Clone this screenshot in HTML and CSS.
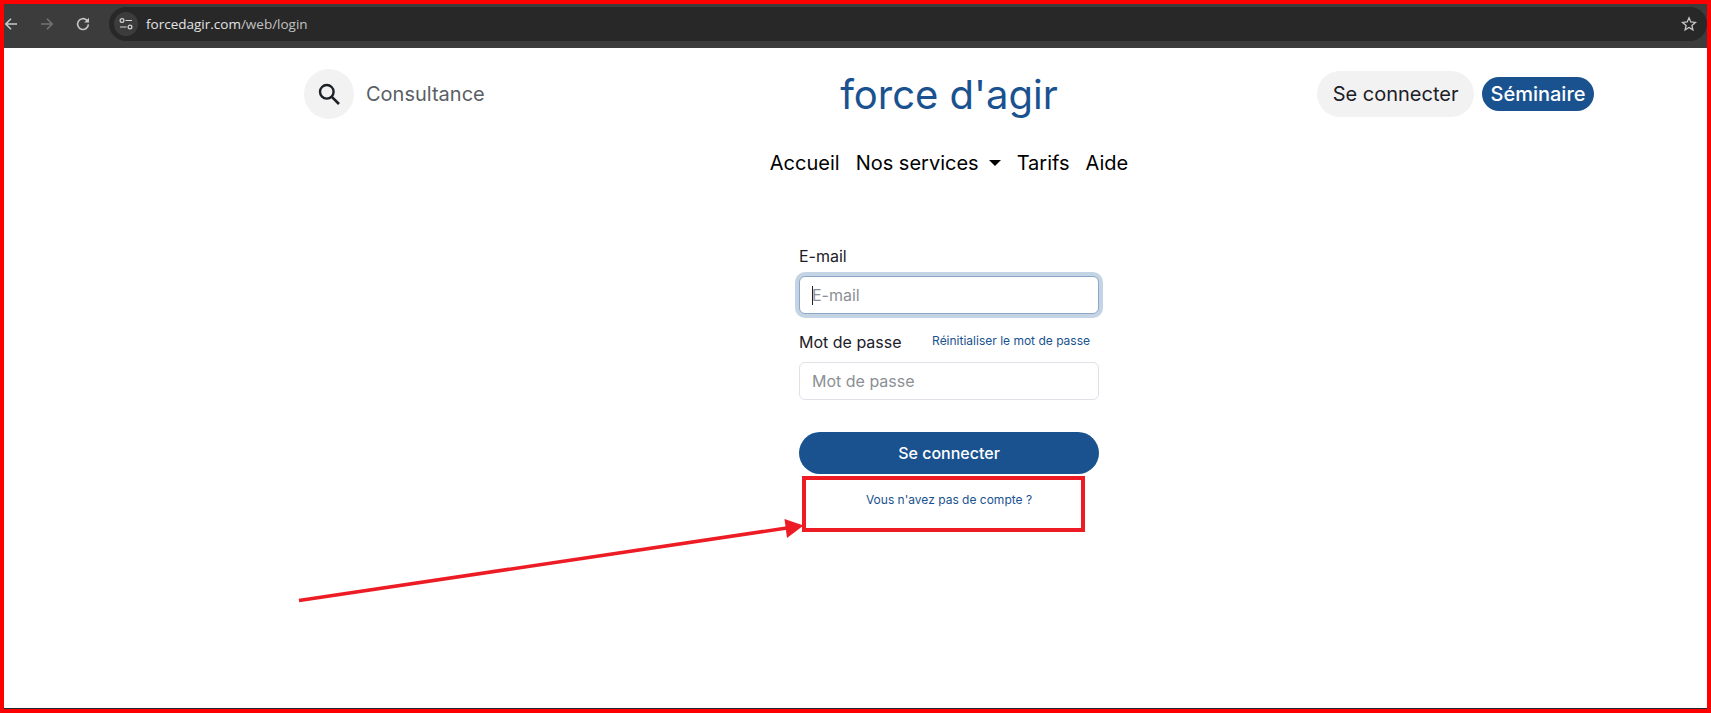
FILE: index.html
```html
<!DOCTYPE html>
<html lang="en">
<head>
    <meta charset="UTF-8">
    <meta name="viewport" content="width=device-width, initial-scale=1.0">
    <title>force d'agir - Se connecter</title>
    <link rel="stylesheet" href="styles.css">
</head>
<body>
    <div class="frame">
        <div class="chrome">
            <div class="chrome-nav">
                <svg class="chrome-icon" width="14" height="14" viewBox="0 0 14 14"><path d="M13 7H2M7 1.800 1.800 7 7 12.200" fill="none" stroke="#c7c7c7" stroke-width="1.600"/></svg>
                <svg class="chrome-icon" width="14" height="14" viewBox="0 0 14 14"><path d="M1 7h11M7 1.800 12.200 7 7 12.200" fill="none" stroke="#737373" stroke-width="1.600"/></svg>
                <svg class="chrome-icon" width="14" height="14" viewBox="0 0 14 14"><path d="M12.400 7.400A5.400 5.400 0 1 1 10.700 3.100L12.400 4.800" fill="none" stroke="#c7c7c7" stroke-width="1.600"/><path d="M13 .8v4.800H8.200z" fill="#c7c7c7"/></svg>
            </div>
            <div class="address">
                <span class="tune">
                    <svg width="14" height="14" viewBox="0 0 14 14"><g fill="none" stroke="#d5d5d5" stroke-width="1.200"><circle cx="3" cy="3.500" r="1.900"/><path d="M6.500 3.500H13M1 10h6.500"/><circle cx="11" cy="10" r="1.900"/></g></svg>
                </span>
                <span class="url">forcedagir.com<span class="url-path">/web/login</span></span>
                <svg class="star" width="16" height="16" viewBox="0 0 16 16"><path d="M8 1.800 9.800 6l4.600.4-3.500 3 1 4.500L8 11.500l-3.900 2.400 1-4.500-3.500-3L6.200 6z" fill="none" stroke="#c7c7c7" stroke-width="1.300"/></svg>
            </div>
        </div>

        <div class="container">
            <header class="site-header">
                <div class="header-left">
                    <button class="search-btn" type="button">
                        <svg width="22" height="22" viewBox="0 0 22 22"><circle cx="8.800" cy="8.800" r="6.800" fill="none" stroke="#1c2027" stroke-width="2.400"/><path d="M13.800 13.800 21 21" stroke="#1c2027" stroke-width="2.600"/></svg>
                    </button>
                    <span class="tagline">Consultance</span>
                </div>
                <a class="brand" href="#">force d'agir</a>
                <div class="header-right">
                    <a class="login-link" href="#">Se connecter</a>
                    <a class="seminar-link" href="#">Séminaire</a>
                </div>
            </header>

            <nav class="main-nav">
                <a href="#">Accueil</a>
                <a href="#">Nos services<span class="caret"></span></a>
                <a href="#">Tarifs</a>
                <a href="#">Aide</a>
            </nav>

            <form class="login-form">
                <label class="field-label" for="email">E-mail</label>
                <div class="input-wrap">
                    <input class="field focused" id="email" type="text" placeholder="E-mail">
                    <span class="text-caret"></span>
                </div>
                <div class="label-row">
                    <label class="field-label" for="password">Mot de passe</label>
                    <a class="reset-link" href="#">Réinitialiser le mot de passe</a>
                </div>
                <input class="field" id="password" type="password" placeholder="Mot de passe">
                <button class="submit-btn" type="button">Se connecter</button>
                <a class="signup-link" href="#">Vous n'avez pas de compte ?</a>
            </form>
        </div>

        <!-- annotation drawn over the screenshot -->
        <svg class="annotation" width="1711" height="713" viewBox="0 0 1711 713">
            <rect x="804" y="478" width="279" height="52" fill="none" stroke="#ed1c24" stroke-width="4"/>
            <path d="M299 600.500 790 527.500" stroke="#ed1c24" stroke-width="3.500"/>
            <path d="M784.500 519 803.500 525.500 787 538z" fill="#ed1c24"/>
        </svg>
    </div>
</body>
</html>
```

FILE: styles.css
```css
* {
    margin: 0;
    padding: 0;
    box-sizing: border-box;
}

body {
    font-family: 'Inter', 'Liberation Sans', sans-serif;
    background: white;
    color: #1c2027;
    overflow: hidden;
}

a {
    text-decoration: none;
}

.frame {
    position: relative;
    height: 713px;
    border: 4px solid #ff0000;
    overflow: hidden;
}

/* dark edge of the window, just above the red border */
.frame::after {
    content: '';
    position: absolute;
    left: 0;
    right: 0;
    bottom: 0;
    height: 1px;
    background: #1f2933;
}

.annotation {
    position: absolute;
    top: -4px;
    left: -4px;
    pointer-events: none;
}

/* browser bar */
.chrome {
    display: flex;
    align-items: center;
    height: 44px;
    padding-bottom: 7px;
    padding-top: 3px;
    background: #3c3c3c;
}

.chrome-nav {
    display: flex;
    align-items: center;
    gap: 22px;
    width: 105px;
}

.address {
    display: flex;
    align-items: center;
    flex: 1;
    height: 34px;
    background: #282828;
    border-radius: 17px;
    padding: 0 10px 0 5px;
}

.tune {
    display: flex;
    align-items: center;
    justify-content: center;
    width: 24px;
    height: 24px;
    background: #3c3c3c;
    border-radius: 50%;
}

.url {
    flex: 1;
    margin-left: 8px;
    font-family: 'Open Sans', sans-serif;
    font-size: 13.5px;
    color: #e3e3e3;
}

.url-path {
    color: #c2c2c2;
}

/* site header */
.container {
    width: 1290px;
    margin-left: 300px;
}

.site-header {
    display: grid;
    grid-template-columns: 1fr auto 1fr;
    align-items: center;
    padding-top: 21px;
}

.header-left {
    display: flex;
    align-items: center;
    gap: 12px;
}

.search-btn {
    display: flex;
    align-items: center;
    justify-content: center;
    width: 50px;
    height: 50px;
    border: none;
    border-radius: 50%;
    background: #f2f2f2;
}

.tagline {
    font-size: 20px;
    color: #5a5f66;
}

.brand {
    font-size: 40px;
    color: #19528f;
}

.header-right {
    display: flex;
    align-items: center;
    justify-content: flex-end;
    gap: 8px;
}

.login-link {
    padding: 10px 15.500px;
    height: 46px;
    font-size: 20px;
    line-height: 26px;
    color: #1c2027;
    background: #f2f2f2;
    border-radius: 23px;
}

.seminar-link {
    padding: 4px 8.500px;
    height: 34px;
    font-size: 20px;
    font-weight: 500;
    line-height: 26px;
    color: white;
    background: #19528f;
    border-radius: 17px;
}

.main-nav {
    display: flex;
    justify-content: center;
    gap: 16px;
    margin-top: 31px;
    font-size: 20px;
    line-height: 26px;
}

.main-nav a {
    color: #000;
}

.caret {
    display: inline-block;
    margin-left: 10px;
    vertical-align: 4px;
    border-top: 6px solid #000;
    border-left: 6px solid transparent;
    border-right: 6px solid transparent;
}

/* login form */
.login-form {
    display: flex;
    flex-direction: column;
    width: 300px;
    margin: 69px auto 0;
}

.field-label {
    font-size: 16px;
    line-height: 22px;
    color: #1c2027;
}

.input-wrap {
    position: relative;
    margin-top: 9px;
}

.text-caret {
    position: absolute;
    top: 10px;
    left: 13px;
    width: 1px;
    height: 19px;
    background: #1c2027;
}

.field {
    display: block;
    width: 100%;
    height: 38px;
    padding: 0 12px;
    font-family: inherit;
    font-size: 16px;
    color: #1c2027;
    background: white;
    border: 1px solid #dee2e6;
    border-radius: 6px;
    outline: none;
}

.field::placeholder {
    color: #8c9096;
}

.field.focused {
    border-color: #8ca8c7;
    box-shadow: 0 0 0 4px #c5d4e4;
}

.label-row {
    display: flex;
    justify-content: space-between;
    align-items: center;
    margin: 17px 0 9px;
}

.reset-link {
    padding-right: 9px;
    margin-bottom: 4px;
    font-size: 12px;
    color: #19528f;
}

.submit-btn {
    height: 42px;
    margin-top: 32px;
    font-family: inherit;
    font-size: 16px;
    font-weight: 500;
    color: white;
    background: #19528f;
    border: none;
    border-radius: 21px;
}

.signup-link {
    margin-top: 18px;
    font-size: 12px;
    line-height: 15px;
    text-align: center;
    color: #19528f;
}
```
